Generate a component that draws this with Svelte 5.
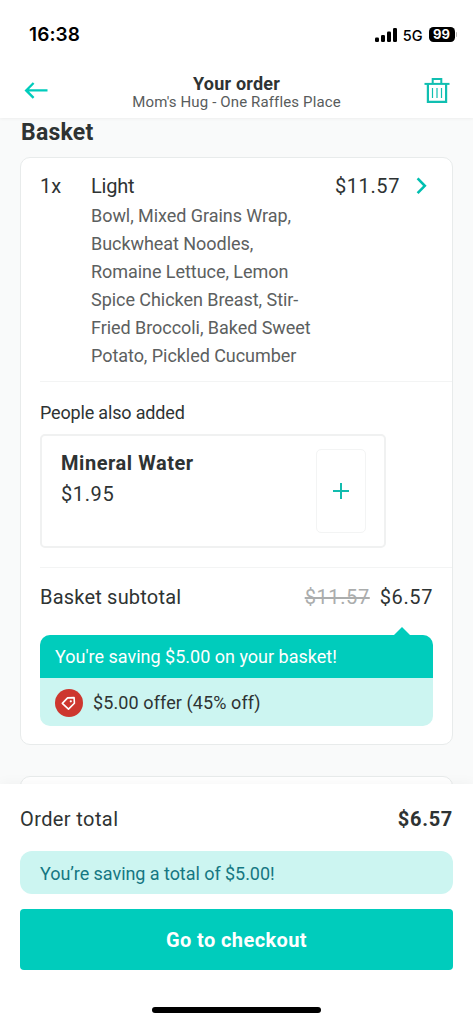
<script lang="ts">
	/**
	 * Order basket screen
	 *
	 * Fixed header and checkout footer with the basket card between them.
	 */

	const item = {
		quantity: 1,
		name: 'Light',
		price: 11.57,
		options: [
			'Bowl, Mixed Grains Wrap,',
			'Buckwheat Noodles,',
			'Romaine Lettuce, Lemon',
			'Spice Chicken Breast, Stir-',
			'Fried Broccoli, Baked Sweet',
			'Potato, Pickled Cucumber'
		]
	};

	const suggestion = { name: 'Mineral Water', price: 1.95 };
	const discount = 5;

	let total = $derived(item.price - discount);

	function money(value: number): string {
		return '$' + value.toFixed(2);
	}
</script>

<div class="screen">
	<header class="header">
		<div class="status-bar">
			<span class="time">16:38</span>
			<div class="status-icons">
				<svg width="22" height="14" viewBox="0 0 22 14" aria-hidden="true">
					<rect x="0" y="9.5" width="4" height="4.5" rx="1.2" />
					<rect x="6" y="7" width="4" height="7" rx="1.2" />
					<rect x="12" y="3.5" width="4" height="10.5" rx="1.2" />
					<rect x="18" y="0" width="4" height="14" rx="1.2" />
				</svg>
				<span class="network">5G</span>
				<span class="battery">99</span>
				<span class="battery-cap"></span>
			</div>
		</div>

		<div class="nav">
			<button class="icon-button" type="button" aria-label="Back">
				<svg width="24" height="18" viewBox="0 0 24 18" fill="none" stroke="#00ccbc" stroke-width="2.4">
					<path d="M23.5 9.4H2M9.6 2 2.2 9.4l7.4 7.4" />
				</svg>
			</button>
			<div class="heading">
				<h1>Your order</h1>
				<p>Mom's Hug - One Raffles Place</p>
			</div>
			<button class="icon-button" type="button" aria-label="Clear basket">
				<svg width="26" height="26" viewBox="0 0 26 26" fill="none" stroke="#10bfb1">
					<path d="M0.5 6.9h25" stroke-width="2" />
					<path d="M8.7 6.5V2h8.6v4.5" stroke-width="2" />
					<path d="M3.9 7v17.8h18.2V7" stroke-width="2.2" />
					<path d="M8.5 11v10M13 11v10M17.5 11v10" stroke-width="1.2" />
				</svg>
			</button>
		</div>
	</header>

	<main class="content">
		<h2>Basket</h2>

		<section class="card">
			<div class="item">
				<span class="quantity">{item.quantity}x</span>
				<div class="details">
					<div class="item-head">
						<span class="item-name">{item.name}</span>
						<span class="price">{money(item.price)}</span>
						<svg width="11" height="18" viewBox="0 0 11 18" fill="none" stroke="#00bfb0" stroke-width="2.6">
							<path d="M1.6 1.4 8.8 8.8l-7.2 7.4" />
						</svg>
					</div>
					<p class="options">
						{#each item.options as line}
							<span>{line}</span>
						{/each}
					</p>
				</div>
			</div>

			<div class="suggestions">
				<h3>People also added</h3>
				<div class="product">
					<div>
						<div class="product-name">{suggestion.name}</div>
						<div class="price">{money(suggestion.price)}</div>
					</div>
					<button class="add" type="button" aria-label="Add {suggestion.name}">
						<svg width="16" height="16" viewBox="0 0 16 16" stroke="#12bcae" stroke-width="2">
							<path d="M8 0v16M0 8h16" />
						</svg>
					</button>
				</div>
			</div>

			<div class="subtotal">
				<span>Basket subtotal</span>
				<s class="price">{money(item.price)}</s>
				<span class="price">{money(total)}</span>
			</div>

			<div class="savings">
				<div class="savings-head">You're saving {money(discount)} on your basket!</div>
				<div class="offer">
					<svg width="28" height="28" viewBox="0 0 28 28" fill="none">
						<circle cx="14" cy="14" r="14" fill="#cd372f" />
						<path
							d="M7.3 14.4 12.6 8.9l6.5-.3.3 5.7-5.9 5.8z"
							stroke="#fff"
							stroke-width="1.6"
							stroke-linejoin="round"
						/>
						<circle cx="15.8" cy="12.3" r="1.1" fill="#fff" />
					</svg>
					<span>{money(discount)} offer (45% off)</span>
				</div>
			</div>
		</section>

		<section class="card next-card"></section>
	</main>

	<footer class="footer">
		<div class="total">
			<span>Order total</span>
			<strong>{money(total)}</strong>
		</div>
		<div class="total-saving">You’re saving a total of {money(discount)}!</div>
		<button class="checkout" type="button">Go to checkout</button>
		<div class="home-indicator"></div>
	</footer>
</div>

<style>
	:global(body) {
		margin: 0;
		background: #fff;
	}

	.screen {
		display: flex;
		flex-direction: column;
		width: 473px;
		height: 1023px;
		overflow: hidden;
		box-sizing: border-box;
		background: #f9fafa;
		color: #2e3333;
		font-family: Roboto, 'Noto Sans', sans-serif;
		font-size: 20px;
		line-height: 28px;
		white-space: nowrap;
	}

	.screen * {
		box-sizing: border-box;
	}

	h1,
	h2,
	h3,
	p {
		margin: 0;
		font-size: inherit;
		font-weight: 400;
	}

	button {
		display: flex;
		align-items: center;
		justify-content: center;
		padding: 0;
		border: none;
		background: transparent;
		font: inherit;
		cursor: pointer;
	}

	svg {
		display: block;
		flex-shrink: 0;
	}

	.price {
		letter-spacing: 0.6px;
	}

	/* Header */
	.header {
		position: relative;
		z-index: 1;
		flex: 0 0 118px;
		background: #fff;
		box-shadow: 0 1px 3px rgba(0, 0, 0, 0.05);
	}

	.status-bar {
		display: flex;
		justify-content: space-between;
		height: 69px;
		padding: 0 16px 0 29px;
		align-items: center;
		color: #000;
		font-family: Inter, sans-serif;
	}

	.time {
		font-size: 19px;
		font-weight: 600;
		letter-spacing: 0.1px;
	}

	.status-icons {
		display: flex;
		align-items: center;
	}

	.network {
		margin: 2px 6px 0 6px;
		font-size: 14.5px;
		font-weight: 500;
	}

	.battery {
		width: 26px;
		height: 15px;
		border-radius: 4.5px;
		background: #000;
		color: #fff;
		font-size: 13px;
		font-weight: 700;
		line-height: 15px;
		text-align: center;
	}

	.battery-cap {
		width: 1.5px;
		height: 5px;
		margin-left: 1px;
		border-radius: 0 2px 2px 0;
		background: #b5b5b5;
	}

	.nav {
		display: flex;
		align-items: center;
		justify-content: space-between;
		height: 42px;
		padding: 0 23px;
	}

	.icon-button {
		width: 26px;
		height: 26px;
	}

	.heading {
		padding-top: 6px;
		text-align: center;
		line-height: 19px;
	}

	.heading h1 {
		font-size: 18px;
		font-weight: 700;
		letter-spacing: 0.2px;
	}

	.heading p {
		color: #585c5c;
		font-size: 15px;
		letter-spacing: 0.13px;
	}

	/* Basket */
	.content {
		flex: 1;
		min-height: 0;
		overflow: hidden;
		padding: 0 20px;
	}

	h2 {
		height: 39px;
		padding: 1px 0 0 1px;
		font-size: 23px;
		font-weight: 700;
		letter-spacing: 0.25px;
	}

	.card {
		height: 588px;
		padding: 14px 0 0 19px;
		border: 1px solid #e8ebeb;
		border-radius: 10px;
		background: #fff;
	}

	.next-card {
		height: 60px;
		margin-top: 31px;
	}

	.item {
		display: flex;
		height: 210px;
		border-bottom: 1px solid #f3f4f4;
	}

	.quantity {
		width: 51px;
	}

	.details {
		flex: 1;
	}

	.item-head {
		display: flex;
		align-items: center;
		padding-right: 25px;
	}

	.item-name {
		letter-spacing: -0.2px;
	}

	.item-head .price {
		margin: 0 16px 0 auto;
	}

	.options {
		padding-top: 2px;
		color: #5c6060;
		font-size: 18px;
		letter-spacing: -0.05px;
	}

	.options span {
		display: block;
	}

	.suggestions {
		height: 186px;
		padding-top: 17px;
		border-bottom: 1px solid #f3f4f4;
	}

	h3 {
		height: 35px;
		font-size: 18px;
		letter-spacing: -0.17px;
	}

	.product {
		display: flex;
		justify-content: space-between;
		width: 346px;
		height: 114px;
		padding: 13px 18px 13px 19px;
		border: 2px solid #f0f1f1;
		border-radius: 5px;
	}

	.product-name {
		padding-bottom: 3px;
		font-weight: 700;
		letter-spacing: 0.55px;
	}

	.add {
		width: 50px;
		height: 84px;
		border: 1px solid #f3f4f4;
		border-radius: 5px;
	}

	.subtotal {
		display: flex;
		padding: 15px 19px 24px 0;
		letter-spacing: 0.2px;
	}

	.subtotal s {
		margin: 0 10px 0 auto;
		color: #abadad;
		text-decoration-thickness: 1.5px;
	}

	.savings {
		position: relative;
		width: 393px;
		height: 91px;
		border-radius: 10px;
		background: #ccf5f1;
	}

	/* Pointer towards the discounted price */
	.savings::before {
		content: '';
		position: absolute;
		top: -8px;
		right: 23px;
		border: 8px solid transparent;
		border-top: none;
		border-bottom-color: #00ccbc;
	}

	.savings-head {
		height: 43px;
		padding: 8px 15px;
		border-radius: 10px 10px 0 0;
		background: #00ccbc;
		color: #fff;
		font-size: 18px;
	}

	.offer {
		display: flex;
		align-items: center;
		gap: 10px;
		height: 50px;
		padding-left: 15px;
		font-size: 18px;
		letter-spacing: 0.1px;
	}

	/* Footer */
	.footer {
		position: relative;
		z-index: 1;
		display: flex;
		flex: 0 0 239px;
		flex-direction: column;
		padding: 21px 20px 0;
		background: #fff;
		box-shadow: 0 -1px 12px rgba(0, 0, 0, 0.04);
	}

	.total {
		display: flex;
		justify-content: space-between;
		height: 46px;
		letter-spacing: 0.4px;
	}

	.total strong {
		letter-spacing: 0.7px;
	}

	.total-saving {
		height: 43px;
		margin-bottom: 15px;
		padding: 9px 20px 0;
		border-radius: 12px;
		background: #ccf5f1;
		color: #157782;
		font-size: 18px;
		letter-spacing: -0.05px;
	}

	.checkout {
		height: 61px;
		padding-top: 1px;
		border-radius: 4px;
		background: #00ccbc;
		color: #fff;
		font-size: 20px;
		font-weight: 700;
		letter-spacing: 0.4px;
	}

	.home-indicator {
		width: 169px;
		height: 6px;
		margin: 37px auto 0;
		border-radius: 3px;
		background: #000;
	}
</style>
